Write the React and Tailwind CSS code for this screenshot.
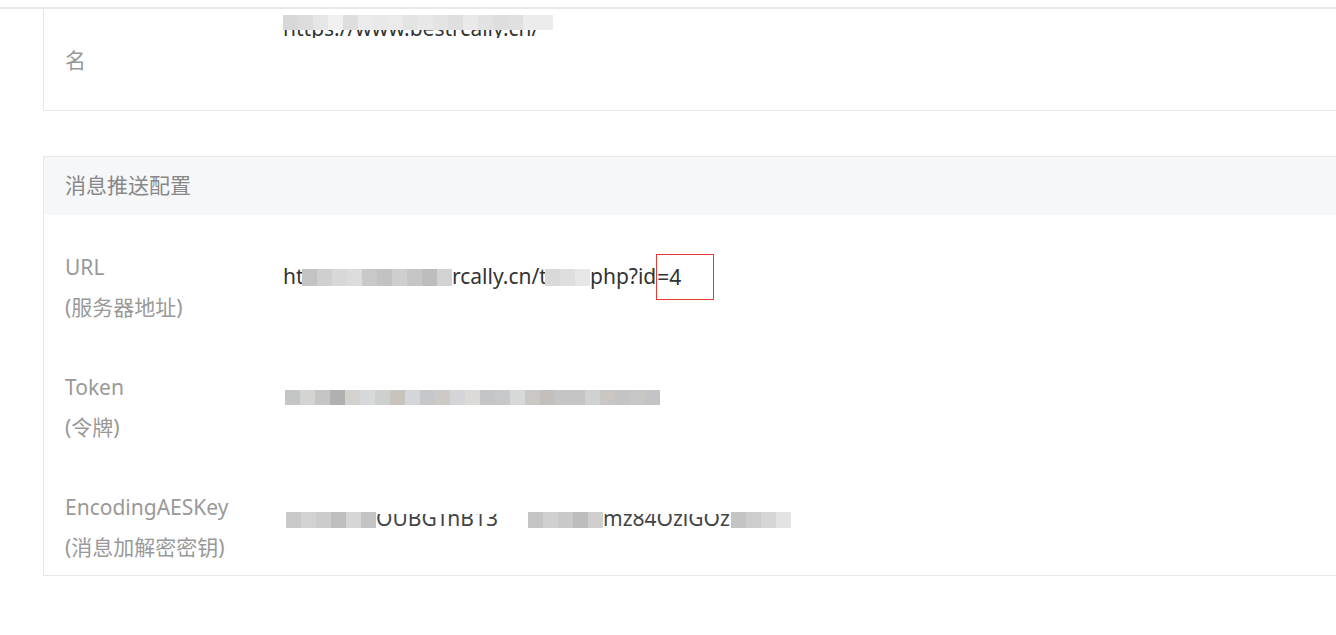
import React from "react";

const tokenBlocks = [
  "#c4c5c7", "#d4d4d2", "#c5c5c5", "#b0b0b0", "#d4d2ce", "#d7d8da", "#ccd0cf",
  "#c8c4bd", "#d5d6da", "#c6c7c9", "#cdcac5", "#d4d5d9", "#dcdad7", "#c4c5c7",
  "#c7c8ca", "#d7d9d8", "#cac8c5", "#c2bfbc", "#c4c5c7", "#c5c5c5", "#cfd2d1",
  "#c9c6c3", "#c4c4c4", "#c7c7c5", "#c4c4c6",
];

const urlBlocks = [
  "#c3c3c3", "#cfcfcf", "#d8d8d8", "#dcdcdc", "#c8c8c8", "#c2c2c2", "#cecece",
  "#c6c6c6", "#bdbdbd", "#d2d2d2",
];

const domainBlocks = [
  "#d8d8d8", "#dcdcdc", "#e6e6e6", "#f0f0f0", "#dedede", "#ebebeb", "#e9e9e9",
  "#ebebeb", "#e4e4e4", "#e8e8e8", "#e4e4e4", "#dfdfdf", "#e9e9e9", "#e2e2e2",
  "#dedede", "#e0e0e0", "#ececec", "#ececec",
];

const aesA = ["#c8c8c8", "#d2d2d2", "#cccccc", "#bebebe", "#d6d6d6", "#c4c4c4"];
const aesB = ["#c5c5c5", "#d0d0d0", "#c9c9c9", "#bdbdbd", "#cfcfcf"];
const aesC = ["#c4c4c4", "#cdcdcd", "#d6d6d6", "#e3e3e3"];

function Mosaic({ colors, h = "h-[15px]" }) {
  return (
    <span className="inline-flex shrink-0">
      {colors.map((c, i) => (
        <span key={i} className={`w-[15px] ${h}`} style={{ backgroundColor: c }} />
      ))}
    </span>
  );
}

function Row({ label, sub, children }) {
  return (
    <div className="flex pt-8 pb-2">
      <div className="w-[239px] shrink-0 pl-[21px] text-[#999] leading-[40px]">
        <div>{label}</div>
        <div>{sub}</div>
      </div>
      <div className="mt-[10px] h-[40px] text-[#333] flex items-center whitespace-nowrap">
        {children}
      </div>
    </div>
  );
}

export default function App() {
  return (
    <div
      className="w-full h-[635px] overflow-hidden bg-white pt-[7px] text-[21px]"
      style={{ fontFamily: '"Noto Sans", "Noto Sans CJK SC", sans-serif' }}
    >
      <div className="border-t-2 border-[#e9e9e9]" />

      <div className="ml-[43px] w-[1320px] h-[102px] border-l border-b border-[#e8e8e8] flex">
        <div className="w-[239px] shrink-0 pl-[21px] pt-[31px] leading-[40px] text-[#999]">
          名
        </div>
        <div className="pt-[6px] flex flex-col">
          <Mosaic colors={domainBlocks} />
          <span className="h-[8px] overflow-hidden text-[#333] leading-[20px] w-[270px] whitespace-nowrap">
            <span className="block -mt-[12px]">https://www.bestrcally.cn/</span>
          </span>
        </div>
      </div>

      <div className="ml-[43px] mt-[45px] w-[1320px] border border-[#e8e8e8]">
        <div className="h-[58px] bg-[#f6f7f9] pl-[21px] flex items-center text-[#888]">
          消息推送配置
        </div>

        <Row label="URL" sub="(服务器地址)">
          <span className="w-[19px]">ht</span>
          <Mosaic colors={urlBlocks} h="h-[17px]" />
          <span className="w-[93px]">rcally.cn/t</span>
          <Mosaic colors={["#d9d9d9", "#dedede", "#e6e6e6"]} h="h-[17px]" />
          <span>php?id</span>
          <span className="inline-block w-[58px] h-[46px] border border-[#e53935] leading-[44px]">
            =4
          </span>
        </Row>

        <Row label="Token" sub="(令牌)">
          <span className="pl-[2px] flex">
            <Mosaic colors={tokenBlocks} />
          </span>
        </Row>

        <Row label="EncodingAESKey" sub="(消息加解密密钥)">
          <span className="pt-[6px] pl-[3px] flex items-center">
            <Mosaic colors={aesA} h="h-[16px]" />
            <span className="h-[12px] overflow-hidden leading-[20px] text-[#444] w-[152px] whitespace-nowrap">
              <span className="block -mt-[6px]">OUBGTnB13</span>
            </span>
            <Mosaic colors={aesB} h="h-[16px]" />
            <span className="h-[12px] overflow-hidden leading-[20px] text-[#444] w-[128px] whitespace-nowrap">
              <span className="block -mt-[6px]">mz84OzjGQz</span>
            </span>
            <Mosaic colors={aesC} h="h-[16px]" />
          </span>
        </Row>
      </div>
    </div>
  );
}
